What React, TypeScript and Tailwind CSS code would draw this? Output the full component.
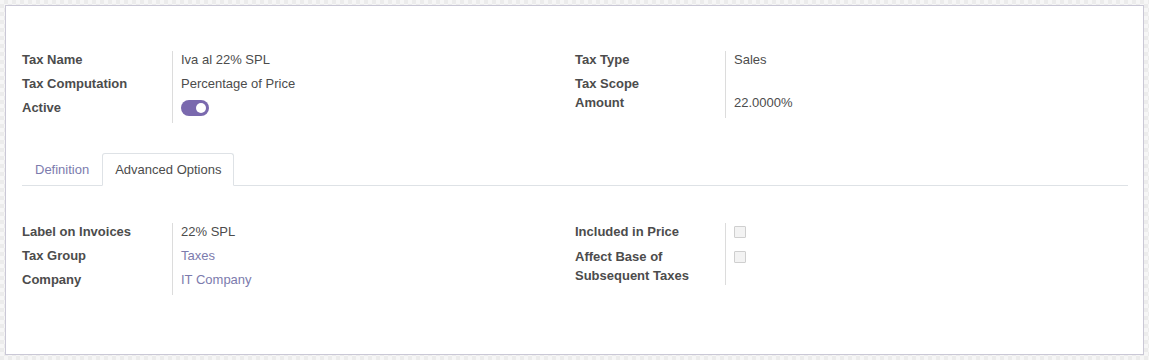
const Row = ({ label, children, first, className = "" }: { label: React.ReactNode; children?: React.ReactNode; first?: boolean; className?: string }) => (
  <div className={`flex ${first ? "h-[18px] items-center" : "h-6 items-end"} ${className}`}>
    <div className="w-[150px] shrink-0 font-bold leading-[18px]">{label}</div>
    <div className="pl-[9px] leading-[18px] flex items-center">{children}</div>
  </div>
)

const Checkbox = () => (
  <span className="inline-block w-[12px] h-[12px] border border-[#cfcfcf] bg-[#f3f3f3] rounded-[1px]"></span>
)

const Group = ({ children, pb = "pb-[6px]" }: { children: React.ReactNode; pb?: string }) => (
  <div className={`relative flex-1 self-start ${pb}`}>
    <div className="absolute left-[150px] top-0 bottom-0 w-px bg-[#dcdcdc]"></div>
    {children}
  </div>
)

export default function App() {
  return (
    <div
      className="min-h-[360px] w-full p-[5px] bg-[repeating-conic-gradient(#ececec_0_25%,#f6f6f6_0_50%)] bg-[length:8px_8px]"
      style={{ fontFamily: '"Liberation Sans", Arial, sans-serif' }}
    >
      <div className="h-[350px] bg-white border border-[#cac8d6] pl-4 pr-[15px] pt-[45px] text-[13px] text-[#4c4c4c]">
        {/* Top group */}
        <div className="flex">
          <Group>
            <Row label="Tax Name" first>Iva al 22% SPL</Row>
            <Row label="Tax Computation">Percentage of Price</Row>
            <Row label="Active">
              <span className="relative inline-block w-[28px] h-[16px] rounded-full bg-[#7a69ae] mb-px">
                <span className="absolute right-[3px] top-[3px] w-[10px] h-[10px] rounded-full bg-white"></span>
              </span>
            </Row>
          </Group>
          <Group>
            <Row label="Tax Type" first>Sales</Row>
            <Row label="Tax Scope"></Row>
            <div className="flex h-[19px] items-end">
              <div className="w-[150px] shrink-0 font-bold leading-[18px]">Amount</div>
              <div className="pl-[9px] leading-[18px]">22.0000%</div>
            </div>
          </Group>
        </div>

        {/* Tabs */}
        <div className="mt-[30px] flex border-b border-[#dee2e6] h-[33px]">
          <div className="px-3 pt-px border border-transparent text-[#7c7bad] leading-[30px]">Definition</div>
          <div className="px-3 pt-px border border-[#dee2e6] border-b-white bg-white rounded-t-[3px] leading-[30px] h-[33px]">
            Advanced Options
          </div>
        </div>

        {/* Bottom group */}
        <div className="mt-[37px] flex">
          <Group>
            <Row label="Label on Invoices" first>22% SPL</Row>
            <Row label="Tax Group"><span className="text-[#7c7bad]">Taxes</span></Row>
            <Row label="Company"><span className="text-[#7c7bad]">IT Company</span></Row>
          </Group>
          <Group pb="pb-0">
            <div className="flex h-[18px] items-center">
              <div className="w-[150px] shrink-0 font-bold leading-[18px]">Included in Price</div>
              <div className="pl-[9px] flex items-center"><Checkbox /></div>
            </div>
            <div className="flex pt-[6px]">
              <div className="w-[150px] shrink-0 font-bold leading-[19px]">
                Affect Base of
                <br />
                Subsequent Taxes
              </div>
              <div className="pl-[9px] pt-[4px]"><div className="flex"><Checkbox /></div></div>
            </div>
          </Group>
        </div>
      </div>
    </div>
  )
}
